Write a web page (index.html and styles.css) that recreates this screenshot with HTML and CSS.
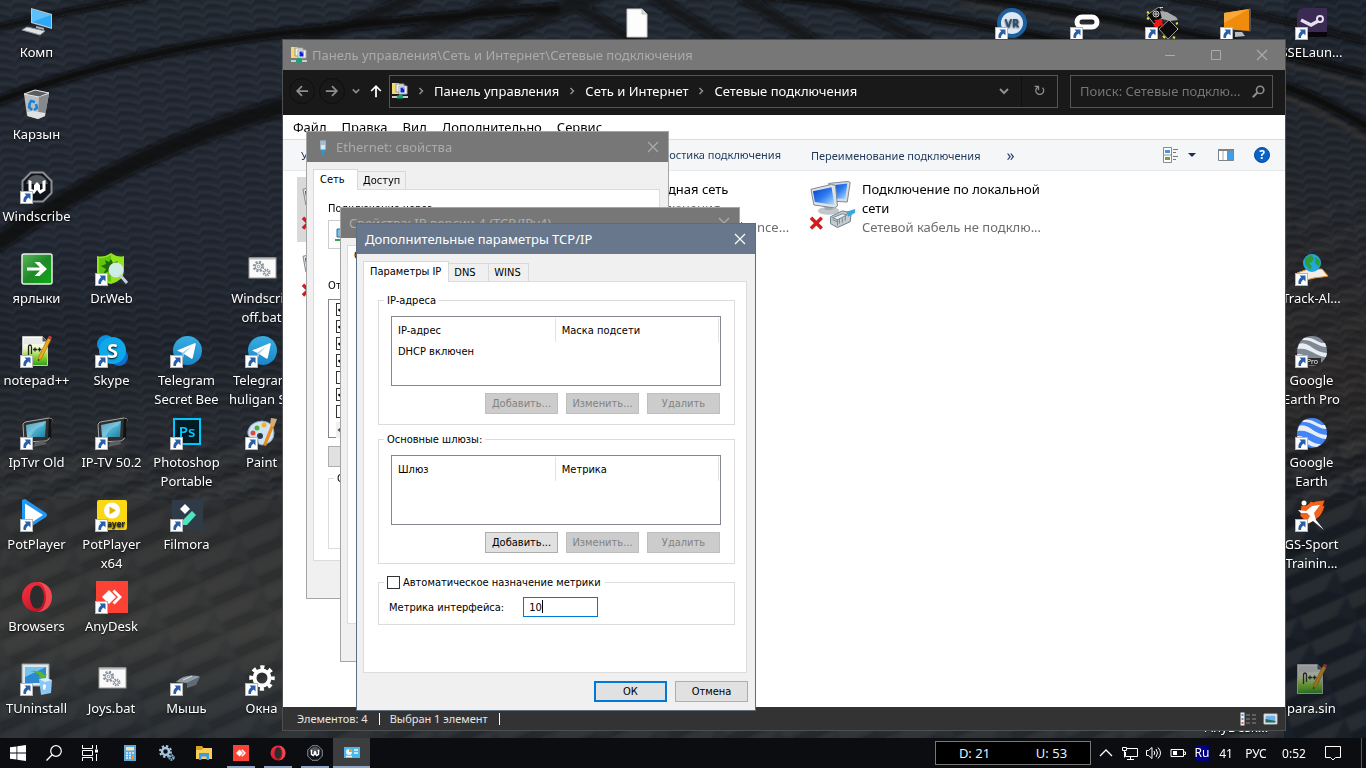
FILE: index.html
```html
<!DOCTYPE html>
<html lang="ru">
<head>
    <meta charset="UTF-8">
    <meta name="viewport" content="width=device-width, initial-scale=1.0">
    <title>Сетевые подключения</title>
    <link rel="stylesheet" href="styles.css">
</head>
<body>
    <!-- Общие иконки -->
    <svg class="sprite" aria-hidden="true">
        <defs>
            <linearGradient id="gScreen" x1="0" y1="0" x2="1" y2="1"><stop offset="0" stop-color="#0a3fc4"/><stop offset=".5" stop-color="#2f7bf0"/><stop offset="1" stop-color="#b9e4ff"/></linearGradient>
            <linearGradient id="gTg" x1="0" y1="0" x2="0" y2="1"><stop offset="0" stop-color="#37aee2"/><stop offset="1" stop-color="#1c86c8"/></linearGradient>
            <linearGradient id="gNpp" x1="0" y1="0" x2="0" y2="1"><stop offset="0" stop-color="#fff"/><stop offset=".4" stop-color="#eef8d0"/><stop offset=".7" stop-color="#8cd32c"/><stop offset="1" stop-color="#2e9e1e"/></linearGradient>
            <linearGradient id="gOpera" x1="0" y1="0" x2="1" y2="1"><stop offset="0" stop-color="#ff3242"/><stop offset="1" stop-color="#a60c1c"/></linearGradient>
            <linearGradient id="gGreen" x1="0" y1="0" x2="1" y2="1"><stop offset="0" stop-color="#5cb85c"/><stop offset=".5" stop-color="#1e8a26"/><stop offset="1" stop-color="#0cab14"/></linearGradient>
            <linearGradient id="gTv" x1="0" y1="0" x2="1" y2="1"><stop offset="0" stop-color="#1c6f92"/><stop offset=".5" stop-color="#52b4d0"/><stop offset="1" stop-color="#1d7ea2"/></linearGradient>
        </defs>
        <symbol id="shortcut" viewBox="0 0 13 13">
            <rect x=".5" y=".5" width="12" height="12" fill="#fff" stroke="#b5b5b5"/>
            <path d="M4.500 2.500h6v6l-2-2c-1.800 1.200-2.500 2.500-2.500 4.500h-2.500c-.5-3 .5-5 2.700-6.700z" fill="#2b5ea8"/>
        </symbol>
        <symbol id="npp" viewBox="0 0 32 32">
            <path d="M1.500 1.500h20l5 5v24h-25z" fill="url(#gNpp)" stroke="#c8c8c8"/>
            <path d="M3 4h18M3 6h18M3 8h22" stroke="#d5d9e2"/>
            <path d="M21.500 1.500v5h5z" fill="#555"/>
            <path d="M7.500 21V12q0-2 1.500-2t1.500 2v7M12 14.500h4M14 12.500v4M16.500 14.500h4M18.500 12.500v4" fill="none" stroke="#222" stroke-width="1.300"/>
            <path d="M17 26l1-5L27 3l3 1.500-9 18z" fill="#f0a81e" stroke="#9a6510" stroke-width=".6"/>
            <path d="M27 3l1-2.500 3 1.500-1 2.500z" fill="#d43b3b"/><path d="M17 26l.4-2 1.400 1z" fill="#222"/>
        </symbol>
        <symbol id="telegram" viewBox="0 0 32 32">
            <circle cx="16.500" cy="15.500" r="14.500" fill="url(#gTg)"/>
            <path d="M6 15.500l17.500-7.200c1-.3 1.400.2 1.200 1.200l-2.900 13.300c-.2.900-.9 1.100-1.600.7l-9.200-5.700z" fill="#fff"/>
            <path d="M11 17.800L21 11l-8 7.800-.5 4.200z" fill="#a9cfe8"/>
        </symbol>
        <symbol id="tv" viewBox="0 0 32 32">
            <path d="M2 7l2-2L28 1l3 1-3 20-3 2L3 25z" fill="#2f2f2f" stroke="#a8a8a8"/>
            <path d="M28 1.500L27 21l3-1 1-18z" fill="#111"/>
            <path d="M5 8l20-4-1 16L6 20z" fill="url(#gTv)"/>
            <path d="M5 8l20-4-3 5c-6 1-10 4-12 11H6z" fill="#bfe9f5" opacity=".35"/>
            <path d="M14 25l8-1 4 3-14 3z" fill="#5b5f62"/>
        </symbol>
        <symbol id="batfile" viewBox="0 0 32 32">
            <rect x="3" y="5" width="27" height="20" fill="#fafafa" stroke="#9b9b9b"/>
            <path d="M3.500 5.500h26" stroke="#b9b9b9" stroke-width="2"/>
            <g fill="none" stroke="#8a949c"><circle cx="12.500" cy="13.500" r="4.500" stroke-width="2.500" stroke-dasharray="2 1.530"/><circle cx="12.500" cy="13.500" r="3.300"/><circle cx="12.500" cy="13.500" r="1.300"/><circle cx="20.500" cy="19.500" r="3" stroke-width="2" stroke-dasharray="1.400 .950"/><circle cx="20.500" cy="19.500" r="1.800"/></g>
        </symbol>
        <symbol id="opera" viewBox="0 0 32 32">
            <ellipse cx="16" cy="16" rx="15" ry="15" fill="url(#gOpera)"/>
            <path d="M16 1c9 0 15 6.500 15 15s-6 15-15 15c6-1 9-8 9-15S22 2 16 1z" fill="#ff5a60" opacity=".75"/>
            <ellipse cx="16" cy="16" rx="7" ry="11.500" fill="#2a2c2e"/>
        </symbol>
        <symbol id="anydesk" viewBox="0 0 32 32">
            <path d="M0 0h32v32H0z" fill="#fb4234"/>
            <path d="M6 16l7-7 7 7-7 7z" fill="#fff"/>
            <path d="M16.500 10.500l2-2 7.500 7.500-7.500 7.500-2-2 5.500-5.500z" fill="#fff"/>
        </symbol>
        <symbol id="windscribe" viewBox="0 0 32 32">
            <path d="M10 1.500h12l8.500 8.500v12L22 30.500H10L1.500 22V10z" fill="#11131b" stroke="#8c9096" stroke-width="2"/>
            <path d="M16 4a11 11 0 0 1 11 9H5a11 11 0 0 1 11-9z" fill="#53565e"/>
            <path d="M7.500 9l3 1v8l2.500 1V14l3-3 3 3v5l2.500-1v-8l3-1v10.500L19 23l-3-4-3 4-5.500-3.500z" fill="#fff"/>
        </symbol>
        <symbol id="gear" viewBox="0 0 32 32">
            <circle cx="16" cy="15" r="7.500" fill="none" stroke="#fff" stroke-width="4"/>
            <circle cx="16" cy="15" r="10.500" fill="none" stroke="#fff" stroke-width="4.500" stroke-dasharray="4 4.250" stroke-dashoffset="2"/>
        </symbol>
        <symbol id="netcomp" viewBox="0 0 52 50">
            <path d="M20 3l20-2 2 1-3 20-16-1z" fill="#d7dce0" stroke="#7d8790"/><path d="M22 5l17-2-2 16-15-1z" fill="url(#gScreen)"/>
            <ellipse cx="20" cy="31" rx="11" ry="4" fill="#c2c7cb"/><path d="M16 24h8v6h-8z" fill="#a2a9af"/>
            <path d="M2 9l21-5 4 1 2 21-3 2-21-3z" fill="#dfe3e6" stroke="#7d8790"/><path d="M4 11l19-4 3 18-20-3z" fill="url(#gScreen)"/>
            <path d="M22 37l12-6 9 2-1 9-13 6-7-4z" fill="#c4ccd2" stroke="#6f7b84"/><path d="M24 38l10-4 5 1-10 5zM29 40v6M24 40l5 2M31 39v5M34 38v5M37 36v5" stroke="#7a858d" fill="#eef1f3"/><path d="M38 32l9-3v4l-7 4z" fill="#3aa6dc"/>
            <path d="M2 38l11 11M13 38L2 49" stroke="#d31d1d" stroke-width="3.500"/>
        </symbol>
        <symbol id="netfolder" viewBox="0 0 16 16">
            <path d="M0 0h7l1 2v9H0z" fill="#f3d873"/><path d="M4 1h8v8H4z" fill="#eee" stroke="#999"/><path d="M7 3h8v8H7z" fill="#f4f4f4" stroke="#aaa"/><path d="M8.500 4.500h4v5h-4z" fill="#101fcf"/><path d="M10 4.500h2.500V7z" fill="#8cb6ff"/>
            <path d="M0 14h16" stroke="#c8ccd0" stroke-width="2"/><path d="M8.500 11v2M5 14h6" stroke="#14a870" stroke-width="3"/>
        </symbol>
        <symbol id="earth" viewBox="0 0 32 32">
            <circle cx="16" cy="16" r="15"/>
            <path d="M3 9c9-4 15 9 28 9l-1 4C18 21 14 12 1.500 14zM8 3c10-2 14 6 21 5l1.500 4C22 12 16 4 6 5zM1 19c9-1 15 9 24 8l-4 3c-8 0-12-7-19-6z" fill="#e9edf3"/>
        </symbol>
        <symbol id="cross" viewBox="0 0 12 12"><path d="M1 1l10 10M11 1L1 11" fill="none" stroke="currentColor" stroke-width="1.200"/></symbol>
        <symbol id="chev" viewBox="0 0 8 8"><path d="M2.500 1L5.500 4l-3 3" fill="none" stroke="currentColor" stroke-width="1.500"/></symbol>
        <symbol id="chevDown" viewBox="0 0 10 10"><path d="M1 3l4 4 4-4" fill="none" stroke="currentColor" stroke-width="2"/></symbol>
        <symbol id="loupe" viewBox="0 0 16 16"><circle cx="10" cy="6" r="4.500" fill="none" stroke="currentColor" stroke-width="2"/><path d="M7 9l-6 6" stroke="currentColor" stroke-width="2.500"/></symbol>
    </svg>

    <!-- Обои -->
    <svg class="wallpaper" viewBox="0 0 1366 768" preserveAspectRatio="xMidYMid slice" aria-hidden="true">
        <defs>
            <linearGradient id="wBase" x1="0" y1="0" x2="0" y2="1"><stop offset="0" stop-color="#222931"/><stop offset=".3" stop-color="#222832"/><stop offset=".45" stop-color="#1f242c"/><stop offset=".62" stop-color="#2b2d30"/><stop offset=".82" stop-color="#383939"/><stop offset="1" stop-color="#262c33"/></linearGradient>
            <linearGradient id="wRight" x1="0" y1="0" x2="0" y2="1"><stop offset="0" stop-color="#1c232c"/><stop offset=".3" stop-color="#25262a"/><stop offset=".5" stop-color="#2b2826"/><stop offset=".7" stop-color="#1b2028"/><stop offset="1" stop-color="#18202a"/></linearGradient>
            <pattern id="wave" width="24" height="9" patternUnits="userSpaceOnUse" patternTransform="rotate(-5)"><path d="M0 3l10 4 4-5 10 1" fill="none" stroke="#49586a" stroke-width="3" opacity=".14"/><path d="M0 7l10 4 4-5 10 1" fill="none" stroke="#0b0e12" stroke-width="3" opacity=".16"/></pattern>
            <pattern id="scale" width="52" height="28" patternUnits="userSpaceOnUse" patternTransform="rotate(-24)"><path d="M0 0h52l-18 14H0z" fill="#6a6a68" opacity=".1"/><path d="M0 14h34l18 14H0z" fill="#0b0c0e" opacity=".12"/></pattern>
            <filter id="soft" x="-5%" y="-20%" width="110%" height="140%"><feGaussianBlur stdDeviation="2"/></filter>
        </defs>
        <rect width="1366" height="768" fill="url(#wBase)"/>
        <path d="M1284 0h82v768h-82z" fill="url(#wRight)"/>
        <path d="M0 0h1366v500H0z" fill="url(#wave)"/>
        <path d="M0 440h1366v328H0z" fill="url(#scale)" filter="url(#soft)"/>
        <path d="M1286 200h80v568h-80z" fill="url(#scale)" opacity=".6"/>
        <g fill="none" stroke="#0b0b0c" filter="url(#soft)">
            <path d="M-5 28Q70 10 150-4" stroke-width="6"/>
            <path d="M-5 102Q130 50 284 33T560 8" stroke-width="9"/>
            <path d="M-5 245Q130 150 290 104" stroke-width="18" opacity=".85"/>
            <path d="M300 45L420-5M390 45L520-5M480 45L600-5M640 45L560-5M730 45L650-5M820 45L740-5M930 45L830-5" stroke-width="12" opacity=".7"/>
            <path d="M760-5Q920 10 1080 45M960-5Q1180 25 1366 75" stroke-width="8"/>
            <path d="M1160-5Q1270 15 1366 42" stroke-width="5"/>
            <path d="M1280 85Q1320 98 1370 128" stroke-width="10"/>
        </g>
        <path d="M960 4Q1180 34 1366 86M1284 97Q1320 110 1366 140" fill="none" stroke="#514638" stroke-width="3" opacity=".55" filter="url(#soft)"/>
    </svg>

    <!-- Значки рабочего стола -->
    <main class="desktop">
        <a href="#" class="icon c1 r1"><svg viewBox="0 0 32 32"><path d="M10 1l21 6v15l-21-6z" fill="#bfc7cd"/><path d="M11 2.500l19 5.500v12.500l-19-5.500z" fill="#2ea8f5"/><path d="M11 2.500l19 5.500-19 7z" fill="#5cc0fb"/><path d="M15 19l8 2v2l-8-2z" fill="#a8afb5"/><path d="M1 23l5-3 18 4-5 4z" fill="#dfe3e6" stroke="#8c9399"/></svg><span>Комп</span></a>
        <a href="#" class="icon c1 r2"><svg viewBox="0 0 32 32"><path d="M3 5l11-4 14 3-4 23-7 3-11-3z" fill="#b9bcbe"/><path d="M3 5l11-4 14 3-10 4z" fill="#5a5c5d" stroke="#e2e4e5"/><path d="M18 8l10-3-4 22-7 2z" fill="#85898c"/><path d="M6 23l6-1 12 2v3l-7 3-10-3z" fill="#dfe1e2"/><path d="M8 16l2-4 4 1M15 15l1 4-3 2M11 21l-3-3 1-3" fill="none" stroke="#1782d8" stroke-width="2.500"/></svg><span>Карзын</span></a>
        <a href="#" class="icon c1 r3"><svg><use href="#windscribe"/></svg><svg class="badge"><use href="#shortcut"/></svg><span>Windscribe</span></a>
        <a href="#" class="icon c1 r4"><svg viewBox="0 0 32 32"><rect x="1" y="1" width="30" height="30" rx="2" fill="url(#gGreen)" stroke="#e8f0e8" stroke-width="1.500"/><path d="M6 14.500h13l-5.500-5.500h5l7.500 7-7.500 7h-5l5.500-5.500H6z" fill="#fff"/></svg><span>ярлыки</span></a>
        <a href="#" class="icon c1 r5"><svg><use href="#npp"/></svg><svg class="badge"><use href="#shortcut"/></svg><span>notepad++</span></a>
        <a href="#" class="icon c1 r6"><svg><use href="#tv"/></svg><svg class="badge"><use href="#shortcut"/></svg><span>IpTvr Old</span></a>
        <a href="#" class="icon c1 r7"><svg viewBox="0 0 32 32"><path d="M1 1l3-1 21 14q2 2 0 4L5 31H1z" fill="#2196f3"/><path d="M4 4.500l18 11.500L4 28z" fill="#fff"/></svg><svg class="badge"><use href="#shortcut"/></svg><span>PotPlayer</span></a>
        <a href="#" class="icon c1 r8"><svg><use href="#opera"/></svg><span>Browsers</span></a>
        <a href="#" class="icon c1 r9"><svg viewBox="0 0 32 32"><path d="M1 1h27v22H1z" fill="#dfe6ea" stroke="#8f9ba3"/><path d="M4 4h21v16H4z" fill="#2e8ad0"/><path d="M4 4h21L4 14z" fill="#74c2ee"/><path d="M9 8q12-1 14 4l3-1-3 6-6-3 2-1q-3-4-10-5z" fill="#58b82c"/><path d="M18 16l13 1-1 13-10 2z" fill="#8cc8f4"/><path d="M18 16l7-1 6 2-7 2z" fill="#d8efff"/><path d="M22 22l2-1 1 2-1 4-2-1z" fill="#fff"/></svg><svg class="badge"><use href="#shortcut"/></svg><span>TUninstall</span></a>

        <a href="#" class="icon c2 r4"><svg viewBox="0 0 32 32"><path d="M1 3q7 2 14-3 7 5 13 3v15q0 9-13 13Q1 27 1 18z" fill="#8ee61a"/><path d="M3 5q6 1 12-3v27Q3 25 3 18z" fill="#62c40e"/><path d="M15 6l2 4 5-2-3 4 4 3-5 1-1 6-4-4-6 3 3-5-5-3 5-2-1-4 4 2z" fill="#1f6a08"/><circle cx="20" cy="17" r="6.500" fill="#c8f0e4" stroke="#dce3ea" stroke-width="2"/><path d="M24 22l7 8" stroke="#c5cbe4" stroke-width="3"/></svg><svg class="badge"><use href="#shortcut"/></svg><span>Dr.Web</span></a>
        <a href="#" class="icon c2 r5"><svg viewBox="0 0 32 32"><circle cx="10" cy="9" r="9" fill="#0f8fe0"/><circle cx="23" cy="22" r="9" fill="#0f6fd0"/><circle cx="16.500" cy="15.500" r="13.500" fill="#0fa8e8"/><text x="16.500" y="23" text-anchor="middle" class="skype-s">S</text></svg><svg class="badge"><use href="#shortcut"/></svg><span>Skype</span></a>
        <a href="#" class="icon c2 r6"><svg><use href="#tv"/></svg><svg class="badge"><use href="#shortcut"/></svg><span>IP-TV 50.2</span></a>
        <a href="#" class="icon c2 r7"><svg viewBox="0 0 32 32"><rect x="1" y="1" width="30" height="30" rx="2" fill="#fad816"/><circle cx="16" cy="11.500" r="8" fill="#fff"/><path d="M13.500 7.500l6.500 4-6.500 4z" fill="#e0b400"/><text x="29" y="28" text-anchor="end" class="pot-t">Player</text></svg><svg class="badge"><use href="#shortcut"/></svg><span>PotPlayer x64</span></a>
        <a href="#" class="icon c2 r8"><svg><use href="#anydesk"/></svg><svg class="badge"><use href="#shortcut"/></svg><span>AnyDesk</span></a>
        <a href="#" class="icon c2 r9"><svg><use href="#batfile"/></svg><span>Joys.bat</span></a>

        <a href="#" class="icon c3 r5"><svg><use href="#telegram"/></svg><svg class="badge"><use href="#shortcut"/></svg><span>Telegram Secret Bee</span></a>
        <a href="#" class="icon c3 r6"><svg viewBox="0 0 32 32"><rect x="3" y="2" width="26" height="25" fill="#001d26" stroke="#00c8ff" stroke-width="2"/><text x="16" y="20" text-anchor="middle" class="ps-t">Ps</text></svg><svg class="badge"><use href="#shortcut"/></svg><span>Photoshop Portable</span></a>
        <a href="#" class="icon c3 r7"><svg viewBox="0 0 32 32"><path d="M1 1h31v30H1z" fill="#2f3c48"/><path d="M9 10l5-5 5 5-5 5z" fill="#fff"/><path d="M12 21l9-9 4 4-9 10h-4z" fill="#4fe3c0"/></svg><svg class="badge"><use href="#shortcut"/></svg><span>Filmora</span></a>
        <a href="#" class="icon c3 r9"><svg viewBox="0 0 32 32"><path d="M3 21Q8 13 19 12q8 0 9 4-5 10-15 11z" fill="#33383c"/><path d="M5 19Q13 11 27 13l2 1-13 6z" fill="#8d9aa4"/><path d="M16 20l13-6-4 8-9 3z" fill="#5f6c76"/><path d="M12 17l9-4" stroke="#d8dee2"/></svg><svg class="badge"><use href="#shortcut"/></svg><span>Мышь</span></a>

        <a href="#" class="icon c4 r4"><svg><use href="#batfile"/></svg><span class="nowrap">Windscrib<br>off.bat</span></a>
        <a href="#" class="icon c4 r5"><svg><use href="#telegram"/></svg><svg class="badge"><use href="#shortcut"/></svg><span class="nowrap">Telegram<br>huligan SB</span></a>
        <a href="#" class="icon c4 r6"><svg viewBox="0 0 32 32"><path d="M2 14Q4 5 16 4q12 1 12 12 0 10-12 12-4 0-4-4t-5-3q-6 0-5-7z" fill="#cfe3f2" stroke="#86a8c4"/><circle cx="18" cy="8" r="2.500" fill="#f0b322"/><circle cx="11" cy="11" r="2.500" fill="#4caf3c"/><circle cx="7" cy="16" r="2.500" fill="#e04a3a"/><circle cx="14" cy="19" r="3" fill="#2a3a4a"/><path d="M17 28l8-20 3 1-8 20z" fill="#e88a1e"/><path d="M24 8l1-7 6 1-3 8z" fill="#d2ab7a"/></svg><svg class="badge"><use href="#shortcut"/></svg><span>Paint</span></a>
        <a href="#" class="icon c4 r9"><svg><use href="#gear"/></svg><svg class="badge"><use href="#shortcut"/></svg><span>Окна</span></a>

        <a href="#" class="icon c9 r1" aria-label="Файл"><svg viewBox="0 0 32 32"><path d="M6 2h15l5 5v23H6z" fill="#fdfdfd" stroke="#c9c9c9"/><path d="M21 2v5h5z" fill="#ddd" stroke="#bbb"/></svg></a>
        <a href="#" class="icon c14 r1" aria-label="VR"><svg viewBox="0 0 32 32"><circle cx="16" cy="16" r="15" fill="#1e5f9e"/><circle cx="16" cy="16" r="11" fill="#dde8f2"/><text x="16" y="20" text-anchor="middle" class="vr-t">VR</text></svg><svg class="badge"><use href="#shortcut"/></svg></a>
        <a href="#" class="icon c15 r1" aria-label="Oculus"><svg viewBox="0 0 32 32"><rect x="6" y="10" width="20" height="10" rx="5" fill="none" stroke="#fff" stroke-width="5"/></svg><svg class="badge"><use href="#shortcut"/></svg></a>
        <a href="#" class="icon c16 r1" aria-label="Контроллер"><svg viewBox="0 0 32 32"><path d="M1 8L13 0l7 8-12 9zM13 22l10-9 9 9-10 10z" fill="#0c0c0c" stroke="#bdbdbd" stroke-width=".8"/><path d="M14 4l7 1 9 5 2 3-8 1-8-2z" fill="#aaa"/><path d="M1 5l2 1M1 11l2 1M14 0h3M30 17l2-1M31 22h1M17 29l2 2M27 30l2 1M11 17l2 2" stroke="#f0e420" stroke-width="2"/><circle cx="10" cy="7" r="3" fill="#222" stroke="#ccc"/><path d="M8 7h4M10 5v4" stroke="#ccc"/><path d="M8 13l8-1 1 8-3-2-4 3-3-3 3-3z" fill="#f01414"/></svg><svg class="badge"><use href="#shortcut"/></svg></a>
        <a href="#" class="icon c17 r1" aria-label="Монитор"><svg viewBox="0 0 32 32"><path d="M28 1l2 1v22l-2 1z" fill="#555"/><path d="M3 6l25-4v22L3 22z" fill="#f08c0c"/><path d="M3 6l25-4L3 16z" fill="#f8a836"/><path d="M14 25h7l3 4-10 1z" fill="#b9bec2"/></svg><svg class="badge"><use href="#shortcut"/></svg></a>
        <a href="#" class="icon c18 r1"><svg viewBox="0 0 32 32"><path d="M1 7q1-6 7-6h23v29H1z" fill="#3b2a52"/><path d="M1 25h30v5H1z" fill="#08060a"/><path d="M5 13l10 5 9-5" fill="none" stroke="#e6dff0" stroke-width="3.500"/><circle cx="24" cy="12" r="3" fill="#33204a" stroke="#e6dff0" stroke-width="2"/></svg><svg class="badge"><use href="#shortcut"/></svg><span>SSELaun...</span></a>
        <a href="#" class="icon c18 r4"><svg viewBox="0 0 32 32"><path d="M1 20l11-4 14 0 6 7-6 1-8 1-12 3z" fill="#f1eee9" stroke="#e78f2e"/><circle cx="16" cy="10" r="9" fill="#22a7dc"/><path d="M9 5l6-3 3 3-2 4-3 1 3 3-2 4-5-6zM19 4l5 4-1 6-4-4z" fill="#2f9d36"/></svg><svg class="badge"><use href="#shortcut"/></svg><span>Track-Al...</span></a>
        <a href="#" class="icon c18 r5"><svg class="earth-pro" viewBox="0 0 32 32"><use href="#earth"/><path d="M10 23h15v7H10z" fill="#2c2c2c"/><text x="22" y="29" text-anchor="end" class="pro-t">Pro</text></svg><svg class="badge"><use href="#shortcut"/></svg><span>Google Earth Pro</span></a>
        <a href="#" class="icon c18 r6"><svg class="earth-blue"><use href="#earth"/></svg><svg class="badge"><use href="#shortcut"/></svg><span>Google Earth</span></a>
        <a href="#" class="icon c18 r7"><svg viewBox="0 0 32 32"><path d="M5 6q6 2 10-4 2 2 5 0l9-1-2 6 2-1q-2 9-7 13l-9 6-9-8z" fill="#f0641e" stroke="#2a1208" stroke-width=".7"/><circle cx="8" cy="4" r="2.500" fill="#fff"/><path d="M2 11l8 1 6-5 8-1-6 8 2 7 8 10-11-9-8 4 5-9-3-3-6 0z" fill="#fff"/></svg><svg class="badge"><use href="#shortcut"/></svg><span>GS-Sport Trainin...</span></a>
        <a href="#" class="icon c18 r9 dim"><svg><use href="#npp"/></svg><span>para.sin</span></a>
        <a href="#" class="icon c17 r9"><svg></svg><span><br>AnyDesk...</span></a>
    </main>

    <!-- Проводник -->
    <section class="window explorer" aria-label="Сетевые подключения">
        <header class="titlebar">
            <svg class="ic16"><use href="#netfolder"/></svg>
            <h1>Панель управления\Сеть и Интернет\Сетевые подключения</h1>
            <button class="sys" aria-label="Свернуть"><svg viewBox="0 0 12 12"><path d="M1 6.500h10" stroke="currentColor"/></svg></button>
            <button class="sys" aria-label="Развернуть"><svg viewBox="0 0 12 12"><path d="M1.500 1.500h9v9h-9z" fill="none" stroke="currentColor"/></svg></button>
            <button class="sys" aria-label="Закрыть"><svg><use href="#cross"/></svg></button>
        </header>
        <nav class="addressbar">
            <button class="round" aria-label="Назад"><svg viewBox="0 0 16 16"><path d="M15 8H3M8 2.500L2.500 8 8 13.500" fill="none" stroke="currentColor" stroke-width="2"/></svg></button>
            <button class="round" aria-label="Вперёд"><svg viewBox="0 0 16 16"><path d="M1 8h12M8 2.500L13.500 8 8 13.500" fill="none" stroke="currentColor" stroke-width="2"/></svg></button>
            <button class="recent" aria-label="Последние"><svg><use href="#chevDown"/></svg></button>
            <button class="up" aria-label="Вверх"><svg viewBox="0 0 16 16"><path d="M8 15V3M2.500 8L8 2.500 13.500 8" fill="none" stroke="currentColor" stroke-width="2"/></svg></button>
            <div class="path">
                <svg class="ic16"><use href="#netfolder"/></svg>
                <svg class="sep"><use href="#chev"/></svg>
                <a href="#">Панель управления</a>
                <svg class="sep"><use href="#chev"/></svg>
                <a href="#">Сеть и Интернет</a>
                <svg class="sep"><use href="#chev"/></svg>
                <a href="#">Сетевые подключения</a>
                <button class="drop" aria-label="История"><svg><use href="#chevDown"/></svg></button>
                <button class="refresh" aria-label="Обновить">↻</button>
            </div>
            <div class="search">
                <input type="text" aria-label="Поиск" placeholder="Поиск: Сетевые подклю...">
                <svg><use href="#loupe"/></svg>
            </div>
        </nav>
        <div class="menubar">
            <button>Файл</button><button>Правка</button><button>Вид</button><button>Дополнительно</button><button>Сервис</button>
        </div>
        <div class="commands">
            <div class="cmd-list">
                <button class="cmd-first">Упорядочить</button>
                <button class="cmd-diag">Диагностика подключения</button>
                <button class="cmd-rename">Переименование подключения</button>
                <button class="cmd-more">»</button>
            </div>
            <button aria-label="Вид"><svg class="w26" viewBox="0 0 36 16"><path d="M1.500.5h8v15h-8zM1.500 8h8" fill="#fff" stroke="#8a8a8a"/><path d="M3 3h5v3H3z" fill="#4a94d4"/><path d="M3 10h5v3H3z" fill="#70a040"/><path d="M11 2.500h5M11 5.500h3M11 9.500h5M11 12.500h3" stroke="#777"/><path d="M26 6h8l-4 4z" fill="#1c2f57"/></svg></button>
            <button aria-label="Область просмотра"><svg class="w16" viewBox="0 0 16 12"><path d="M.5.5h15v11H.5z" fill="#fff" stroke="#7c8288"/><path d="M0 1h16" stroke="#7c8288" stroke-width="2"/><path d="M9 2h6v9H9z" fill="#3f9fe8"/><path d="M5 2v9" stroke="#aaa"/></svg></button>
            <button aria-label="Справка"><svg class="w16" viewBox="0 0 16 16"><circle cx="8" cy="8" r="7.500" fill="#0a64c8" stroke="#064a98"/><text x="8" y="12" text-anchor="middle" class="help-t">?</text></svg></button>
        </div>
        <div class="connections">
            <article class="conn selected"><svg><use href="#netcomp"/></svg></article>
            <article class="conn"><svg><use href="#netcomp"/></svg><div><h2>Беспроводная сеть</h2><p>Нет подключения</p><p>Network Adapter 2 Advance...</p></div></article>
            <article class="conn"><svg><use href="#netcomp"/></svg><div><h2>Подключение по локальной сети</h2><p>Сетевой кабель не подклю...</p></div></article>
            <article class="conn"><svg><use href="#netcomp"/></svg></article>
        </div>
        <footer class="statusbar">
            <span>Элементов: 4</span><span>Выбран 1 элемент</span>
            <svg viewBox="0 0 38 14"><path d="M.5.5h4v13h-4z" fill="#eee"/><path d="M1.500 3h2M1.500 7h2" stroke="#3a7abd" stroke-width="1.500"/><path d="M1.500 11h2" stroke="#c33" stroke-width="1.500"/><path d="M6 3h4M12 3h4M6 7h4M12 7h4M6 11h4M12 11h4" stroke="#8c8c8c"/><path d="M24 2h13v10H24z" fill="#fff" stroke="#bbb"/><path d="M25.500 3.500h10v7h-10z" fill="#6db2e8"/><path d="M25.500 7l10 2v1.500h-10z" fill="#2d6a5a"/></svg>
        </footer>
    </section>

    <!-- Ethernet: свойства -->
    <section class="window dialog ethernet" aria-label="Ethernet">
        <header class="titlebar">
            <svg class="ic16" viewBox="0 0 16 16"><path d="M5 1h6v10H5z" fill="#dbe6ee" stroke="#6c7f90"/><path d="M7 1v5M9 1v5" stroke="#7590a5"/><path d="M6 11h4v2H6zM7 13h2v3H7z" fill="#1e9fd0"/></svg>
            <h1>Ethernet: свойства</h1>
            <button class="sys" aria-label="Закрыть"><svg><use href="#cross"/></svg></button>
        </header>
        <div class="tabs"><button class="active">Сеть</button><button>Доступ</button></div>
        <div class="panel">
            <p>Подключение через:</p>
            <div class="adapter"><svg class="ic16" viewBox="0 0 16 16"><path d="M2 2h12v8H2z" fill="#6cc4f0" stroke="#2d6f9a"/><path d="M0 13h16" stroke="#3aa04a" stroke-width="2"/></svg></div>
            <p>Отмеченные компоненты:</p>
            <div class="components">
                <input type="checkbox" aria-label="Компонент 1" checked>
                <input type="checkbox" aria-label="Компонент 2" checked>
                <input type="checkbox" aria-label="Компонент 3" checked>
                <input type="checkbox" aria-label="Компонент 4" checked>
                <input type="checkbox" aria-label="Компонент 5">
                <input type="checkbox" aria-label="Компонент 6" checked>
                <input type="checkbox" aria-label="Компонент 7">
                <button class="hscroll" aria-label="Прокрутка"><svg viewBox="0 0 10 10"><path d="M8 1L3 5l5 4" fill="none" stroke="#555" stroke-width="2"/></svg></button>
            </div>
            <button class="btn" aria-label="Установить"></button>
            <fieldset><legend>Описание</legend></fieldset>
        </div>
    </section>

    <!-- Свойства IPv4 -->
    <section class="window dialog ipv4" aria-label="TCP/IPv4">
        <header class="titlebar">
            <h1>Свойства: IP версии 4 (TCP/IPv4)</h1>
            <button class="sys" aria-label="Закрыть"><svg><use href="#cross"/></svg></button>
        </header>
        <div class="tabs"><button class="active">Общие</button></div>
        <div class="panel"></div>
    </section>

    <!-- Дополнительные параметры -->
    <section class="window dialog advanced" aria-label="TCP/IP">
        <header class="titlebar">
            <h1>Дополнительные параметры TCP/IP</h1>
            <button class="sys" aria-label="Закрыть"><svg><use href="#cross"/></svg></button>
        </header>
        <div class="tabs"><button class="active">Параметры IP</button><button>DNS</button><button>WINS</button></div>
        <form class="panel">
            <fieldset>
                <legend>IP-адреса</legend>
                <div class="listview">
                    <table>
                        <tr><th>IP-адрес</th><th>Маска подсети</th></tr>
                        <tr><td>DHCP включен</td><td></td></tr>
                    </table>
                </div>
                <div class="actions">
                    <button type="button" class="btn" disabled>Добавить...</button>
                    <button type="button" class="btn" disabled>Изменить...</button>
                    <button type="button" class="btn" disabled>Удалить</button>
                </div>
            </fieldset>
            <fieldset>
                <legend>Основные шлюзы:</legend>
                <div class="listview">
                    <table>
                        <tr><th>Шлюз</th><th>Метрика</th></tr>
                    </table>
                </div>
                <div class="actions">
                    <button type="button" class="btn">Добавить...</button>
                    <button type="button" class="btn" disabled>Изменить...</button>
                    <button type="button" class="btn" disabled>Удалить</button>
                </div>
            </fieldset>
            <fieldset class="metric">
                <legend><input type="checkbox" id="autoMetric"><label for="autoMetric">Автоматическое назначение метрики</label></legend>
                <div class="metric-row">
                    <label for="metric">Метрика интерфейса:</label>
                    <span class="caret-field"><input type="text" id="metric" value="10"></span>
                </div>
            </fieldset>
        </form>
        <div class="footer">
            <button class="btn default">ОК</button>
            <button class="btn">Отмена</button>
        </div>
    </section>

    <!-- Панель задач -->
    <footer class="taskbar">
        <div class="pinned">
            <button class="task" aria-label="Пуск"><svg viewBox="0 0 16 16"><path d="M0 2.300l6.500-.9v6.200H0zM7.300 1.300L16 0v7.600H7.300zM0 8.400h6.500v6.200L0 13.700zM7.300 8.400H16V16l-8.700-1.300z" fill="#fff"/></svg></button>
            <button class="task" aria-label="Поиск"><svg viewBox="0 0 16 16"><circle cx="10" cy="6" r="5.300" fill="none" stroke="#fff" stroke-width="1.200"/><path d="M6.200 9.800L.5 15.500" stroke="#fff" stroke-width="1.400"/></svg></button>
            <button class="task" aria-label="Представление задач"><svg viewBox="0 0 16 16"><path d="M.5 0v3.500h10V0M.5 16v-3.500h10V16M.5 5.500h10v5H.5zM14.500 0v4M14.500 9v7" fill="none" stroke="#fff"/><path d="M13 4.500h3v3h-3z" fill="#fff"/></svg></button>
        </div>
        <button class="task" aria-label="Калькулятор"><svg viewBox="0 0 16 16"><path d="M2 0h12v16H2z" fill="#5ba7dc"/><path d="M4 2h8v3.500H4z" fill="#f3e3b2"/><path d="M4 8h2M7 8h2M10 8h2M4 10.500h2M7 10.500h2M4 13h2M7 13h2" stroke="#e8f4ff" stroke-width="1.500"/><path d="M10 10h2v4h-2z" fill="#f0962a"/></svg></button>
        <button class="task" aria-label="Службы"><svg viewBox="0 0 16 16"><circle cx="6.500" cy="6.500" r="3.500" fill="none" stroke="#a8c6dc" stroke-width="2.500"/><circle cx="6.500" cy="6.500" r="5.500" fill="none" stroke="#a8c6dc" stroke-width="2" stroke-dasharray="2.300 2"/><circle cx="12.500" cy="12.500" r="2" fill="none" stroke="#86b4d4" stroke-width="2.500" stroke-dasharray="1.500 .6"/></svg></button>
        <button class="task" aria-label="Проводник"><svg viewBox="0 0 16 16"><path d="M0 1h6l1 2h9v11H0z" fill="#f8cf5a"/><path d="M0 1h6l1 2-1 2H0z" fill="#dba126"/><path d="M3 8h10v7h-2.500v-3.500h-5V15H3z" fill="#3f9be0"/></svg></button>
        <button class="task open" aria-label="AnyDesk"><svg><use href="#anydesk"/></svg></button>
        <button class="task open" aria-label="Opera"><svg><use href="#opera"/></svg></button>
        <button class="task open" aria-label="Windscribe"><svg><use href="#windscribe"/></svg></button>
        <button class="task open current" aria-label="Панель управления"><svg viewBox="0 0 16 16"><path d="M0 2h16v11H0z" fill="#4eb6ea"/><circle cx="5" cy="7" r="3" fill="#e8f6ff"/><path d="M5 7V4a3 3 0 0 1 3 3z" fill="#f39a1e"/><path d="M10 5h4M10 8h4M2 11.500h6" stroke="#e8f6ff" stroke-width="1.500"/></svg></button>

        <div class="tray">
            <div class="netmeter"><span>D: 21</span><span>U: 53</span></div>
            <button aria-label="Скрытые значки"><svg viewBox="0 0 16 16"><path d="M2 11l6-6 6 6" fill="none" stroke="#fff" stroke-width="1.300"/></svg></button>
            <button aria-label="Сеть"><svg viewBox="0 0 16 16"><path d="M5 3.500h10.500v8H3.500V7M8.500 12v3M5 14.500h7M.5 2.500h4v3h-4zM2.500 6v6.500" fill="none" stroke="#fff"/></svg></button>
            <button aria-label="Громкость"><svg viewBox="0 0 16 16"><path d="M.5 5.500h2L6 2.500v11L2.500 10.500h-2zM8 6q1.500 2 0 4M10 4q3 4 0 8M12 2.500q5 5.500 0 11" fill="none" stroke="#fff"/></svg></button>
            <button aria-label="Батарея"><svg viewBox="0 0 16 16"><path d="M1 4.500h12.500v7H1zM14 7h1.500v2.500H14" fill="none" stroke="#fff"/><path d="M3 6h4v4H3z" fill="#fff"/></svg></button>
            <button class="lang"><span>Ru</span></button>
            <span class="temp">41</span>
            <button class="layout">РУС</button>
            <time class="clock">0:52</time>
            <button class="notes" aria-label="Уведомления"><svg viewBox="0 0 16 16"><path d="M.5 1.500h15v11h-5L8 15l-2.500-2.500h-5z" fill="none" stroke="#fff"/></svg></button>
        </div>
    </footer>
</body>
</html>
```
FILE: styles.css
```css
* {
    margin: 0;
    padding: 0;
    box-sizing: border-box;
}

body {
    font-family: 'Noto Sans', 'Open Sans', sans-serif;
    font-size: 13px;
    background: #1f252d;
    color: #000;
    min-height: 100vh;
    overflow: hidden;
    position: relative;
}

button, input {
    font: inherit;
    color: inherit;
    background: none;
    border: none;
}

a {
    color: inherit;
    text-decoration: none;
}

h1, h2 {
    font-size: 13px;
    font-weight: 400;
}

svg {
    display: block;
    flex: none;
}

.sprite {
    position: absolute;
    width: 0;
    height: 0;
}

.wallpaper {
    position: absolute;
    inset: 0;
    width: 100%;
    height: 100%;
}

.ic16 {
    width: 16px;
    height: 16px;
}

/* Рабочий стол */
.desktop {
    position: relative;
    height: 738px;
    padding-top: 7px;
    margin-left: -1px;
    display: grid;
    grid-template-columns: repeat(18, 75px);
    grid-template-rows: repeat(9, 82px);
}

.icon {
    position: relative;
    display: flex;
    flex-direction: column;
    align-items: center;
    color: #fff;
    line-height: 19px;
    text-align: center;
    text-shadow: 0 1px 2px #000;
}

.icon svg {
    width: 32px;
    height: 32px;
    margin-bottom: 4px;
}

.icon .badge {
    position: absolute;
    left: 21px;
    top: 20px;
    width: 13px;
    height: 13px;
    margin: 0;
}

.nowrap {
    white-space: nowrap;
}

.dim svg {
    opacity: 0.6;
}

.c1 { grid-column: 1; }
.c2 { grid-column: 2; }
.c3 { grid-column: 3; }
.c4 { grid-column: 4; }
.c9 { grid-column: 9; }
.c14 { grid-column: 14; }
.c15 { grid-column: 15; }
.c16 { grid-column: 16; }
.c17 { grid-column: 17; }
.c18 { grid-column: 18; }
.r1 { grid-row: 1; }
.r2 { grid-row: 2; }
.r3 { grid-row: 3; }
.r4 { grid-row: 4; }
.r5 { grid-row: 5; }
.r6 { grid-row: 6; }
.r7 { grid-row: 7; }
.r8 { grid-row: 8; }
.r9 { grid-row: 9; }

.skype-s {
    font-size: 20px;
    font-weight: 700;
    fill: #fff;
}

.ps-t {
    font-size: 15px;
    font-weight: 600;
    fill: #00c8ff;
}

.pot-t {
    font-size: 8px;
    font-weight: 700;
    fill: #222;
}

.vr-t {
    font-size: 11px;
    font-weight: 700;
    fill: #2b4f7c;
}

.pro-t {
    font-size: 7px;
    fill: #fff;
}

.help-t {
    font-size: 12px;
    font-weight: 700;
    fill: #fff;
}

.earth-pro {
    fill: #7f8894;
}

.earth-blue {
    fill: #4285f4;
}

/* Окна */
.window {
    position: absolute;
    isolation: isolate;
    display: flex;
    flex-direction: column;
    border: 1px solid #a5a5a5;
    background: #f0f0f0;
}

.titlebar {
    height: 30px;
    flex: none;
    display: flex;
    align-items: center;
    padding-left: 8px;
    background: #777;
    color: #ababab;
}

.titlebar h1 {
    flex: 1;
    white-space: nowrap;
}

.titlebar .ic16 {
    margin-right: 5px;
}

.sys {
    width: 46px;
    height: 30px;
    display: flex;
    align-items: center;
    justify-content: center;
}

.sys svg {
    width: 12px;
    height: 12px;
}

.dialog .sys {
    width: 30px;
}

.explorer {
    top: 39px;
    left: 282px;
    right: 80px;
    bottom: 37px;
    background: #fff;
    border-color: #4d4f50;
}

.addressbar {
    height: 45px;
    flex: none;
    display: flex;
    align-items: center;
    padding: 0 12px 3px 6px;
    background: #191919;
    color: #8e8e8e;
}

.round {
    width: 26px;
    height: 26px;
    margin-right: 4px;
    border: 1px solid #0e0e0e;
    border-radius: 50%;
    display: flex;
    align-items: center;
    justify-content: center;
}

.round svg, .up svg {
    width: 14px;
    height: 14px;
}

.recent {
    padding: 0 6px 0 3px;
}

.recent svg {
    width: 8px;
    height: 8px;
}

.up {
    padding: 0 6px 0 3px;
    color: #fff;
}

.path {
    flex: 1;
    height: 33px;
    display: flex;
    align-items: center;
    border: 1px solid #555;
    padding-left: 2px;
    color: #fff;
}

.sep {
    width: 8px;
    height: 8px;
    margin: 0 9px;
    color: #8e8e8e;
}

.drop {
    margin-left: auto;
    padding: 0 12px;
    color: #8e8e8e;
}

.drop svg {
    width: 10px;
    height: 10px;
}

.refresh {
    width: 36px;
    height: 31px;
    border-left: 1px solid #101010;
    font-family: 'DejaVu Sans', sans-serif;
    font-size: 15px;
    color: #8e8e8e;
}

.search {
    width: 203px;
    height: 33px;
    margin-left: 12px;
    display: flex;
    align-items: center;
    border: 1px solid #555;
    padding: 0 7px 0 9px;
}

.search input {
    flex: 1;
    min-width: 0;
    outline: none;
}

.search input::placeholder {
    color: #757575;
}

.search svg {
    width: 13px;
    height: 13px;
}

.menubar {
    height: 24px;
    flex: none;
    display: flex;
    gap: 15px;
    padding: 0 10px;
    line-height: 25px;
}

.commands {
    height: 32px;
    flex: none;
    display: flex;
    align-items: center;
    padding: 0 15px 0 18px;
    gap: 20px;
    background: #f5f6f8;
    border-top: 1px solid #d9dce0;
    border-bottom: 1px solid #e6e8ea;
    color: #1e395b;
    font-size: 11px;
}

.cmd-list {
    flex: 1;
    display: flex;
}

.cmd-first {
    width: 326px;
    text-align: left;
}

.cmd-diag {
    width: 154px;
    margin-right: 30px;
    display: flex;
    justify-content: flex-end;
    white-space: nowrap;
}

.cmd-more {
    margin-left: 26px;
    font-size: 16px;
    line-height: 16px;
}

.w26 {
    width: 36px;
    height: 16px;
}

.w16 {
    width: 16px;
    height: 16px;
}

.connections {
    flex: 1;
    display: grid;
    grid-template-columns: repeat(3, 246px);
    grid-template-rows: 65px 65px;
    gap: 2px 8px;
    padding: 6px 14px;
    overflow: hidden;
}

.conn {
    display: flex;
    padding: 3px 2px 0 4px;
    line-height: 19px;
    color: #6d6d6d;
}

.conn.selected {
    background: #d9d9d9;
}

.conn svg {
    width: 51px;
    height: 50px;
    margin-right: 2px;
}

.conn div {
    min-width: 0;
}

.conn h2 {
    color: #000;
}

.conn p {
    white-space: nowrap;
}

.statusbar {
    height: 23px;
    flex: none;
    display: flex;
    align-items: center;
    padding: 0 7px 0 14px;
    background: #333;
    color: #e6e6e6;
    font-size: 11px;
}

.statusbar span {
    line-height: 12px;
    padding-right: 11px;
    margin-right: 10px;
    border-right: 1px solid #fff;
}

.statusbar svg {
    width: 38px;
    height: 14px;
    margin-left: auto;
}

/* Диалоги */
.tabs {
    display: flex;
    align-items: flex-end;
    height: 27px;
    padding-left: 6px;
}

.tabs button {
    height: 18px;
    padding: 0 5px;
    border: 1px solid #d9d9d9;
    border-left: none;
    border-bottom: none;
    line-height: 16px;
    text-align: left;
}

.tabs .active {
    position: relative;
    z-index: 1;
    height: 21px;
    margin-bottom: -1px;
    padding: 0 7px 1px 6px;
    border-left: 1px solid #d9d9d9;
    background: #fff;
}

.tabs, .panel, .footer {
    font-family: 'DejaVu Sans Condensed', 'DejaVu Sans', sans-serif;
    font-size: 11px;
}

.panel {
    flex: 1;
    margin: 0 8px 0 6px;
    padding: 11px 11px 0 14px;
    background: #fff;
    border: 1px solid #dcdcdc;
}

.btn {
    height: 21px;
    min-width: 73px;
    background: #e1e1e1;
    border: 1px solid #adadad;
}

.btn:disabled {
    background: #ccc;
    border-color: #bfbfbf;
    color: #838383;
}

.btn.default {
    border: 2px solid #0078d7;
}

input[type="checkbox"] {
    appearance: none;
    flex: none;
    width: 13px;
    height: 13px;
    background: #fff;
    border: 1px solid #333;
}

fieldset {
    min-width: 0;
    padding: 8px 5px 10px;
    border: 1px solid #dcdcdc;
}

legend {
    padding: 0 3px;
    height: 15px;
    line-height: 16px;
}

.ethernet {
    top: 131px;
    left: 306px;
    width: 363px;
    min-height: 468px;
}

.ethernet .tabs button {
    min-width: 45px;
}

.ethernet .panel {
    margin-bottom: 37px;
    display: flex;
    flex-direction: column;
    line-height: 16px;
}

.adapter {
    height: 29px;
    margin: 3px 0 29px;
    padding: 6px;
    border: 1px solid #ccc;
}

.components {
    height: 139px;
    margin: 5px 0 8px;
    padding: 3px 0 0 7px;
    border: 1px solid #828790;
    display: flex;
    flex-direction: column;
    gap: 4px;
}

.components input:checked::after {
    content: "";
    display: block;
    width: 4px;
    height: 7px;
    margin: 0 0 0 3px;
    border: solid #000;
    border-width: 0 2px 2px 0;
    transform: rotate(40deg);
}

.hscroll {
    padding: 3px 0;
    background: #f0f0f0;
}

.hscroll svg {
    width: 10px;
    height: 10px;
}

.ethernet .btn {
    width: 104px;
}

.ethernet fieldset {
    height: 78px;
    margin-top: 4px;
}

.ipv4 {
    top: 207px;
    left: 340px;
    width: 400px;
    min-height: 455px;
}

.ipv4 .panel {
    margin-bottom: 37px;
}

.advanced {
    top: 223px;
    left: 356px;
    width: 400px;
    min-height: 488px;
    border-color: #5d6d80;
}

.advanced .titlebar {
    background: #68778b;
    color: #fff;
}

.advanced .tabs button:not(.active) {
    min-width: 40px;
}

.advanced fieldset {
    margin-bottom: 7px;
}

.listview {
    height: 70px;
    margin: 0 8px 7px 7px;
    padding: 1px 1px 0 0;
    border: 1px solid #828790;
}

.listview table {
    width: 100%;
    border-collapse: collapse;
    table-layout: fixed;
}

.listview th {
    height: 24px;
    padding: 0 6px;
    border-right: 1px solid #e2e2e2;
    font-weight: 400;
    text-align: left;
}

.listview td {
    height: 18px;
    padding: 0 6px;
}

.actions, .footer {
    display: flex;
    justify-content: flex-end;
    gap: 8px;
}

.actions {
    padding-right: 9px;
}

.metric {
    padding: 7px 5px;
}

.advanced .metric {
    margin-top: 11px;
}

.metric legend {
    display: flex;
    align-items: center;
    gap: 3px;
    padding-right: 4px;
}

.metric-row {
    display: flex;
    align-items: center;
    gap: 19px;
    padding-left: 5px;
}

.caret-field {
    position: relative;
}

.caret-field input {
    width: 75px;
    height: 20px;
    padding: 0 5px;
    border: 1px solid #0078d7;
    outline: none;
}

.caret-field::after {
    content: "";
    position: absolute;
    left: 19px;
    top: 3px;
    width: 1px;
    height: 13px;
    background: #000;
}

.footer {
    padding: 8px 7px;
}

/* Панель задач */
.taskbar {
    position: absolute;
    left: 0;
    right: 0;
    bottom: 0;
    height: 30px;
    display: flex;
    background: #0b0d10;
    color: #fff;
}

.pinned {
    display: flex;
    padding-right: 3px;
}

.task {
    width: 37px;
    display: flex;
    align-items: center;
    justify-content: center;
}

.pinned .task {
    width: 36px;
}

.task svg {
    width: 16px;
    height: 16px;
}

.open {
    background: linear-gradient(#8ea3c8, #8ea3c8) center bottom / 28px 2px no-repeat;
}

.current {
    background: linear-gradient(#8ea3c8, #8ea3c8) center bottom / 100% 2px no-repeat #3b3d3f;
}

.tray {
    margin-left: auto;
    margin-right: 4px;
    padding-right: 9px;
    border-right: 1px solid #555;
    display: flex;
    align-items: center;
}

.tray button, .temp, .clock {
    width: 24px;
    display: flex;
    justify-content: center;
    font-size: 12px;
}

.tray svg {
    width: 16px;
    height: 16px;
}

.netmeter {
    width: 156px;
    height: 24px;
    margin-right: 3px;
    display: flex;
    align-items: center;
    justify-content: space-around;
    background: #000;
    border: 1px solid #777;
    color: #e2f1ff;
}

.lang span {
    background: #000080;
    line-height: 16px;
}

.tray .layout {
    width: 36px;
}

.tray .clock {
    width: 40px;
}

.tray .notes {
    width: 38px;
}
```
